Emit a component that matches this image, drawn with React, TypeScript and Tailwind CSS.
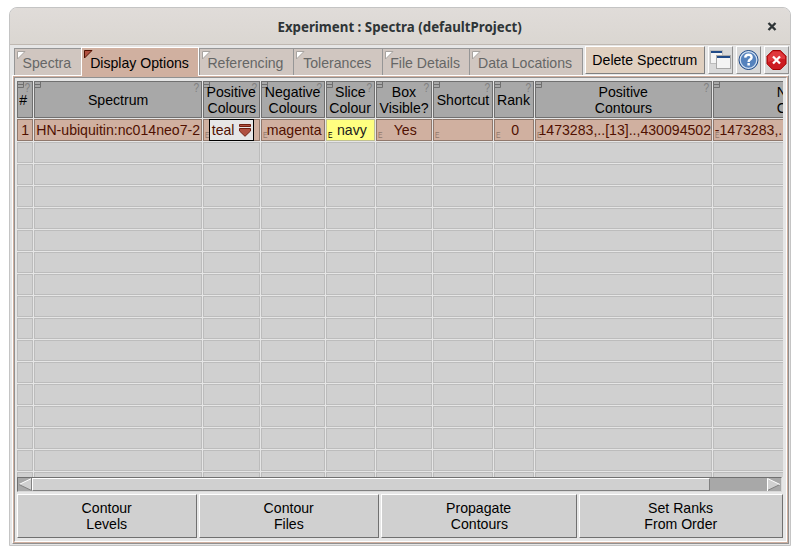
import React from "react";

const columns = [
  { w: "w-[16px]", title: ["#"], value: "1", help: true, edit: false },
  { w: "w-[168px]", title: ["Spectrum"], value: "HN-ubiquitin:nc014neo7-2", help: true, edit: false },
  { w: "w-[57px]", title: ["Positive", "Colours"], value: "teal", help: true, edit: true },
  { w: "w-[64px]", title: ["Negative", "Colours"], value: "magenta", help: true, edit: true },
  { w: "w-[49px]", title: ["Slice", "Colour"], value: "navy", help: true, edit: true },
  { w: "w-[56px]", title: ["Box", "Visible?"], value: "Yes", help: true, edit: true },
  { w: "w-[60px]", title: ["Shortcut"], value: "", help: true, edit: true },
  { w: "w-[40px]", title: ["Rank"], value: "0", help: true, edit: true },
  { w: "w-[177px]", title: ["Positive", "Contours"], value: "1473283,..[13]..,430094502", help: true, edit: true },
  { w: "w-[184px]", title: ["Negative", "Contours"], value: "-1473283,..[13]..,-430094502", help: false, edit: true },
];

const tabs = [
  { w: "w-[67px]", label: "Spectra" },
  { w: "w-[118px]", label: "Display Options", active: true },
  { w: "w-[94px]", label: "Referencing" },
  { w: "w-[89px]", label: "Tolerances" },
  { w: "w-[87px]", label: "File Details" },
  { w: "w-[114px]", label: "Data Locations" },
];

function Label({ children }: { children: React.ReactNode }) {
  return <span className="relative inline-block scale-x-[0.94] whitespace-nowrap">{children}</span>;
}

function Tab({ w, label, active }: { w: string; label: string; active?: boolean }) {
  return (
    <div
      className={`relative flex shrink-0 items-center justify-center ${w} ${
        active
          ? "z-10 h-[29px] border-t border-r border-l border-white bg-[#d0b0a0] pt-[2px] text-black"
          : "mt-px h-[27px] border-t border-l border-[#969696] bg-[#d0c6c0] pt-[2px] pr-[2px] text-[#666] last-of-type:border-r"
      }`}
    >
      <svg className="absolute top-[2px] left-[2px]" width="9" height="9" viewBox="0 0 9 9">
        <path d="M.5 .5H8L.5 8Z" fill={active ? "#b05040" : "#fff"} stroke={active ? "#501000" : "#a8a4a0"} />
      </svg>
      <Label>{label}</Label>
    </div>
  );
}

function ToolButton({ children }: { children: React.ReactNode }) {
  return (
    <div className="flex h-[28px] w-[25px] items-center justify-center border border-t-white border-r-[#909090] border-b-[#909090] border-l-white bg-[#d8d8d8]">
      {children}
    </div>
  );
}

function HeaderCell({ col }: { col: (typeof columns)[number] }) {
  return (
    <div
      className={`relative flex h-[37px] shrink-0 flex-col items-center justify-center border border-[#707070] bg-[#a8a8a8] leading-4 ${col.w} ${
        col.title[0] === "#" ? "pr-[3px]" : ""
      }`}
    >
      <svg className="absolute top-0 left-0" width="6" height="6" viewBox="0 0 6 6">
        <path d="M0 2.5H5.5M0 5.5H5.5V0" fill="none" stroke="#707070" />
      </svg>
      {col.help && (
        <span className="absolute top-[-1px] right-px scale-x-[0.85] text-[12px] leading-[14px] text-[#808080]">?</span>
      )}
      {col.title.map((t) => (
        <Label key={t}>{t}</Label>
      ))}
    </div>
  );
}

function ValueCell({ col }: { col: (typeof columns)[number] }) {
  const navy = col.value === "navy";
  return (
    <div
      className={`relative flex h-[22px] shrink-0 items-center justify-center border whitespace-nowrap ${col.w} ${
        navy ? "border-[#c0c090] bg-[#ffff80] text-[#202020]" : "border-[#90786c] bg-[#d0b0a0] text-[#501000]"
      } ${col.edit && col.value !== "teal" ? "pl-[2px]" : ""}`}
    >
      {col.edit && (
        <span
          className={`absolute bottom-px left-px origin-left scale-x-[0.75] text-[9px] leading-[8px] ${
            navy ? "text-black" : "text-[#90786c]"
          }`}
        >
          E
        </span>
      )}
      {col.value === "teal" ? (
        <div className="relative flex h-[22px] w-[45px] shrink-0 items-center border border-black bg-[#e6e6e6] pl-px">
          <span className="w-[28px]">
            <Label>teal</Label>
          </span>
          <svg width="12" height="13" viewBox="0 0 12 13">
            <path d="M.5 .5H11.5V2.5H.5Z" fill="#b05040" stroke="#702010" />
            <path d="M.5 4.5H11.5V7L6 12.3L.5 7Z" fill="#b05040" stroke="#702010" />
          </svg>
        </div>
      ) : (
        <Label>{col.value}</Label>
      )}
    </div>
  );
}

function ActionButton({ w, lines }: { w: string; lines: string[] }) {
  return (
    <div className={`flex h-[44px] shrink-0 flex-col items-center justify-center border border-t-white border-r-[#707070] border-b-[#707070] border-l-white bg-[#d0d0d0] leading-4 ${w}`}>
      <Label>{lines[0]}</Label>
      <Label>{lines[1]}</Label>
    </div>
  );
}

export default function App() {
  return (
    <div className="h-[555px] w-[800px] overflow-hidden bg-white pt-[7px] pl-[9px] font-['Liberation_Sans',sans-serif] text-[15px] leading-4 text-black">
      <div className="flex h-[539px] w-[782px] flex-col overflow-hidden rounded-t-[8px] border border-[#c4c4c4] bg-[#e6e6e6]">
        <div className="flex h-[37px] shrink-0 items-center border-b border-[#bfb8b1] bg-linear-to-b from-[#e0dcd9] to-[#dad6d1] pt-px">
          <div className="ml-[180px] w-[420px] text-center font-['Noto_Sans',sans-serif] text-[14px] font-bold text-[#2e3436]">
            <span className="inline-block scale-x-[0.95] whitespace-nowrap">Experiment : Spectra (defaultProject)</span>
          </div>
          <svg className="mb-px ml-[157px]" width="10" height="9" viewBox="0 0 10 9">
            <path d="M1.5 1L8.5 8M8.5 1L1.5 8" stroke="#2e3436" strokeWidth="2.4" />
          </svg>
        </div>
        <div className="flex h-[30px] shrink-0 items-start pt-[2px] pl-[4px]">
          <div className="flex border-r border-transparent">
            {tabs.map((t) => (
              <Tab key={t.label} {...t} />
            ))}
          </div>
          <div className="mt-[-1px] ml-px flex h-[28px] w-[120px] shrink-0 items-center justify-center border border-t-white border-r-[#808080] border-b-[#808080] border-l-white bg-[#e0d0c0]">
            <Label>Delete Spectrum</Label>
          </div>
          <div className="mt-[-1px] ml-[3px] flex gap-[3px]">
            <ToolButton>
              <svg className="shrink-0" width="21" height="22" viewBox="0 0 21 22">
                <rect x=".5" y="1.5" width="12" height="13" fill="#f4f4f4" stroke="#bcbcbc" />
                <path d="M1 3H12" stroke="#204a87" strokeWidth="2" />
                <rect x="6.5" y="6.5" width="14" height="13" fill="#f4f4f4" stroke="#a8a8a8" />
                <path d="M7 8H20" stroke="#204a87" strokeWidth="2" />
              </svg>
            </ToolButton>
            <ToolButton>
              <svg className="shrink-0" width="21" height="22" viewBox="0 0 21 22">
                <circle cx="10.5" cy="11" r="9.5" fill="#5582bd" stroke="#204a87" />
                <circle cx="10.5" cy="11" r="8.3" fill="none" stroke="#d7e3f2" strokeWidth="1.2" />
                <path d="M7.2 8.6Q7.4 5.8 10.5 5.8Q13.6 5.8 13.6 8.4Q13.6 9.7 12 10.6Q10.6 11.4 10.6 12.9" fill="none" stroke="#fff" strokeWidth="2.4" />
                <rect x="9.4" y="14" width="2.5" height="2.5" fill="#fff" />
              </svg>
            </ToolButton>
            <ToolButton>
              <svg className="shrink-0" width="21" height="22" viewBox="0 0 21 22">
                <path d="M6.7 1.5H14.3L20 7.2V14.8L14.3 20.5H6.7L1 14.8V7.2Z" fill="#cc1c22" stroke="#a40000" />
                <path d="M7.1 2.5H13.9L19 7.6V10Q10 9.5 2 13V7.6Z" fill="#ec4b50" opacity=".6" />
                <path d="M7 7.5L14 14.5M14 7.5L7 14.5" stroke="#fff" strokeWidth="2.3" />
              </svg>
            </ToolButton>
          </div>
        </div>
        <div className="ml-[2px] flex h-[469px] w-[777px] shrink-0 flex-col border border-t-white border-r-[#909090] border-b-[#909090] border-l-white">
          <div className="flex h-[467px] flex-col border border-[#d0b0a0]">
            <div className="flex h-[465px] flex-col border border-t-[#909090] border-r-white border-b-white border-l-[#909090] pt-[3px] pl-[2px]">
              <div className="h-[396px] w-[766px] shrink-0 overflow-hidden">
                <div className="flex gap-px">
                  {columns.map((c, i) => (
                    <HeaderCell key={i} col={c} />
                  ))}
                </div>
                <div className="mt-px flex gap-px">
                  {columns.map((c, i) => (
                    <ValueCell key={i} col={c} />
                  ))}
                </div>
                {Array.from({ length: 16 }, (_, r) => (
                  <div key={r} className="mt-px flex gap-px">
                    {columns.map((c, i) => (
                      <div key={i} className={`h-[21px] shrink-0 border border-[#bcbcbc] bg-[#d0d0d0] ${c.w}`} />
                    ))}
                  </div>
                ))}
              </div>
              <div className="flex h-[15px] w-[765px] shrink-0 border border-t-[#707070] border-r-[#d8d8d8] border-b-[#d8d8d8] border-l-[#707070] bg-[#a8a8a8]">
                <svg width="14" height="13" viewBox="0 0 14 13">
                  <path d="M1 6.5L13.5 .5V12.5Z" fill="#d0d0d0" />
                  <path d="M1 6.5L13.5 .5" stroke="#fff" />
                  <path d="M1 6.5L13.5 12.5V0" fill="none" stroke="#808080" />
                </svg>
                <div className="h-[13px] w-[678px] border border-t-white border-r-[#808080] border-b-[#808080] border-l-white bg-[#d0d0d0]" />
                <svg className="ml-auto" width="14" height="13" viewBox="0 0 14 13">
                  <path d="M.5 .5L13 6.5L.5 12.5Z" fill="#d0d0d0" />
                  <path d="M.5 12.5L13 6.5" stroke="#808080" />
                  <path d="M.5 13V.5L13 6.5" fill="none" stroke="#fff" />
                </svg>
              </div>
              <div className="mt-[2px] flex gap-[2px]">
                <ActionButton w="w-[180px]" lines={["Contour", "Levels"]} />
                <ActionButton w="w-[180px]" lines={["Contour", "Files"]} />
                <ActionButton w="w-[196px]" lines={["Propagate", "Contours"]} />
                <ActionButton w="w-[204px]" lines={["Set Ranks", "From Order"]} />
              </div>
            </div>
          </div>
        </div>
      </div>
    </div>
  );
}
